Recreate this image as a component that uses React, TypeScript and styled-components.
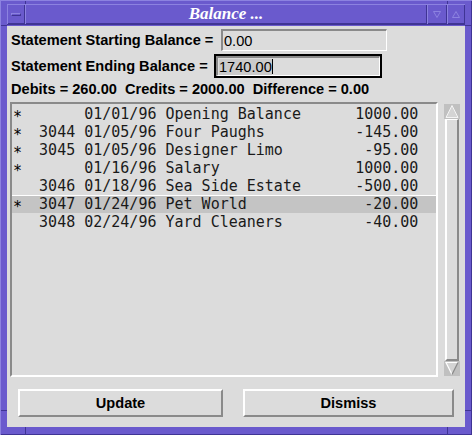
import React from 'react';
import styled, { createGlobalStyle } from 'styled-components';

const PURPLE = '#6a5acd';
const PURPLE_LIGHT = '#8c82e0';
const PURPLE_DARK = '#3f3494';
const GRAY = '#dcdcdc';
const SHADOW = '#8a8a8a';

const Global = createGlobalStyle`
  html, body { margin: 0; padding: 0; background: ${PURPLE}; }
  body { width: 472px; height: 435px; overflow: hidden; }
`;

const Window = styled.div`
  box-sizing: border-box;
  width: 472px;
  height: 435px;
  display: flex;
  flex-direction: column;
  padding: 4px 7px 8px 7px;
  background-color: ${PURPLE};
  background-image:
    linear-gradient(${PURPLE_DARK}, ${PURPLE_DARK}),
    linear-gradient(${PURPLE_DARK}, ${PURPLE_DARK}),
    linear-gradient(${PURPLE_DARK}, ${PURPLE_DARK}),
    linear-gradient(${PURPLE_DARK}, ${PURPLE_DARK}),
    linear-gradient(${PURPLE_DARK}, ${PURPLE_DARK}),
    linear-gradient(${PURPLE_DARK}, ${PURPLE_DARK}),
    linear-gradient(${PURPLE_DARK}, ${PURPLE_DARK}),
    linear-gradient(${PURPLE_DARK}, ${PURPLE_DARK});
  background-repeat: no-repeat;
  background-size: 1px 4px, 1px 4px, 1px 8px, 1px 8px, 7px 1px, 7px 1px, 7px 1px, 7px 1px;
  background-position: 25px 0, 447px 0, 25px 427px, 447px 427px, 0 25px, 0 410px, 465px 25px, 465px 410px;
  box-shadow: inset 1px 1px 0 ${PURPLE_LIGHT}, inset -1px -1px 0 ${PURPLE_DARK};
`;

const TitleBar = styled.div`
  display: flex;
  height: 20px;
  margin-bottom: 2px;
  box-shadow: 0 1px 0 ${PURPLE_DARK};
`;

const TitleCell = styled.div<{ $w?: number }>`
  box-sizing: border-box;
  ${(p) => (p.$w ? `width: ${p.$w}px; flex: none;` : 'flex: 1;')}
  height: 20px;
  display: flex;
  align-items: center;
  justify-content: center;
  box-shadow: inset 1px 1px 0 ${PURPLE_LIGHT}, inset -1px -1px 0 ${PURPLE_DARK};
`;

const TitleText = styled.span`
  font-family: 'Liberation Serif', 'DejaVu Serif', serif;
  font-weight: bold;
  font-style: italic;
  font-size: 17px;
  line-height: 20px;
  color: #ffffff;
`;

const MenuGlyph = styled.span`
  display: block;
  width: 10px;
  height: 3px;
  box-sizing: border-box;
  border-top: 1px solid ${PURPLE_LIGHT};
  border-left: 1px solid ${PURPLE_LIGHT};
  border-bottom: 1px solid ${PURPLE_DARK};
  border-right: 1px solid ${PURPLE_DARK};
`;

const Content = styled.div`
  flex: 1;
  display: flex;
  flex-direction: column;
  background: ${GRAY};
  font-family: 'Liberation Sans', Arial, sans-serif;
  color: #000;
  min-height: 0;
`;

const FieldRow = styled.div<{ $h: number }>`
  display: flex;
  align-items: center;
  height: ${(p) => p.$h}px;
  margin-top: 3px;
  padding-left: 4px;
`;

const Label = styled.div<{ $w: number }>`
  width: ${(p) => p.$w}px;
  flex: none;
  font-weight: bold;
  font-size: 14.6px;
  white-space: pre;
`;

const Field = styled.div<{ $h: number }>`
  box-sizing: border-box;
  width: 166px;
  height: ${(p) => p.$h}px;
  display: flex;
  align-items: center;
  padding-left: 1px;
  border-top: 2px solid ${SHADOW};
  border-left: 2px solid ${SHADOW};
  border-bottom: 1px solid #fff;
  border-right: 1px solid #fff;
  background: ${GRAY};
  font-size: 14.6px;
`;

const FocusRing = styled.div`
  box-sizing: border-box;
  border: 2px solid #000;
  height: 24px;
  width: 168px;
  display: flex;
`;

const SelText = styled.span`
  background: #cbcbcb;
`;

const Caret = styled.span`
  display: inline-block;
  width: 1px;
  height: 15px;
  background: #000;
`;

const Summary = styled.div`
  margin-top: 1px;
  height: 20px;
  line-height: 20px;
  padding-left: 4px;
  font-weight: bold;
  font-size: 14.6px;
  white-space: pre;
`;

const ListArea = styled.div`
  display: flex;
  margin-top: 3px;
  height: 275px;
  padding-left: 3px;
`;

const ListBox = styled.div`
  box-sizing: border-box;
  width: 428px;
  height: 275px;
  padding-top: 1px;
  border-top: 2px solid ${SHADOW};
  border-left: 2px solid ${SHADOW};
  border-bottom: 2px solid #fff;
  border-right: 2px solid #fff;
  font-family: 'DejaVu Sans Mono', 'Liberation Mono', monospace;
  font-size: 15px;
  color: #1a1a1a;
`;

const Row = styled.div<{ $sel?: boolean }>`
  box-sizing: border-box;
  display: grid;
  grid-template-columns: 3ch 5ch 9ch 21ch 7ch;
  height: 18px;
  white-space: pre;
  background: ${(p) => (p.$sel ? '#c4c4c4' : 'transparent')};
  border-top: ${(p) => (p.$sel ? '1px solid #fff' : '0')};
  line-height: ${(p) => (p.$sel ? '17px' : '18px')};
`;

const Cell = styled.span<{ $right?: boolean }>`
  text-align: ${(p) => (p.$right ? 'right' : 'left')};
`;

const FlagCell = styled.span`
  display: block;
  transform: translate(1px, 3px);
  color: #000;
`;

const ScrollBar = styled.div`
  width: 16px;
  margin-left: 6px;
  padding: 2px 0 1px;
  display: flex;
  flex-direction: column;
`;

const Arrow = styled.svg`
  display: block;
  width: 16px;
  height: 15px;
  flex: none;
  background: #c0c0c0;
`;

const Thumb = styled.div`
  flex: 1;
  box-sizing: border-box;
  margin: 0 1px;
  border-top: 1px solid #fff;
  border-left: 2px solid #fff;
  border-right: 2px solid ${SHADOW};
  border-bottom: 2px solid ${SHADOW};
  background: ${GRAY};
`;

const ButtonRow = styled.div`
  display: grid;
  grid-template-columns: 205px 211px;
  column-gap: 20px;
  padding: 0 11px;
  margin-top: 12px;
`;

const Button = styled.button`
  box-sizing: border-box;
  height: 28px;
  margin: 0;
  padding: 0;
  background: ${GRAY};
  border-top: 2px solid #fff;
  border-left: 2px solid #fff;
  border-bottom: 2px solid ${SHADOW};
  border-right: 2px solid ${SHADOW};
  font-family: 'Liberation Sans', Arial, sans-serif;
  font-weight: bold;
  font-size: 14.6px;
  color: #000;
`;

const rows = [
  { flag: '*', num: '', date: '01/01/96', desc: 'Opening Balance', amt: '1000.00' },
  { flag: '*', num: '3044', date: '01/05/96', desc: 'Four Paughs', amt: '-145.00' },
  { flag: '*', num: '3045', date: '01/05/96', desc: 'Designer Limo', amt: '-95.00' },
  { flag: '*', num: '', date: '01/16/96', desc: 'Salary', amt: '1000.00' },
  { flag: '', num: '3046', date: '01/18/96', desc: 'Sea Side Estate', amt: '-500.00' },
  { flag: '*', num: '3047', date: '01/24/96', desc: 'Pet World', amt: '-20.00', sel: true },
  { flag: '', num: '3048', date: '02/24/96', desc: 'Yard Cleaners', amt: '-40.00' },
];

export default function App() {
  return (
    <>
      <Global />
      <Window>
        <TitleBar>
          <TitleCell $w={18}>
            <MenuGlyph />
          </TitleCell>
          <TitleCell>
            <TitleText>Balance ...</TitleText>
          </TitleCell>
          <TitleCell $w={20}>
            <svg width="8" height="7" viewBox="0 0 8 7">
              <path d="M0.5 0.5 L7.5 0.5 L4 6.5 Z" fill="none" stroke={PURPLE_LIGHT} strokeWidth="1" />
            </svg>
          </TitleCell>
          <TitleCell $w={18}>
            <svg width="8" height="7" viewBox="0 0 8 7">
              <path d="M4 0.5 L7.5 6.5 L0.5 6.5 Z" fill="none" stroke={PURPLE_LIGHT} strokeWidth="1" />
            </svg>
          </TitleCell>
        </TitleBar>
        <Content>
          <FieldRow $h={22}>
            <Label $w={210}>Statement Starting Balance =</Label>
            <Field $h={22}>0.00</Field>
          </FieldRow>
          <FieldRow $h={24}>
            <Label $w={203}>Statement Ending Balance =</Label>
            <FocusRing>
              <Field $h={20}>
                <SelText>1740.00</SelText>
                <Caret />
              </Field>
            </FocusRing>
          </FieldRow>
          <Summary>Debits = 260.00  Credits = 2000.00  Difference = 0.00</Summary>
          <ListArea>
            <ListBox>
              {rows.map((r, i) => (
                <Row key={i} $sel={r.sel}>
                  <FlagCell>{r.flag}</FlagCell>
                  <Cell>{r.num}</Cell>
                  <Cell>{r.date}</Cell>
                  <Cell>{r.desc}</Cell>
                  <Cell $right>{r.amt}</Cell>
                </Row>
              ))}
            </ListBox>
            <ScrollBar>
              <Arrow viewBox="0 0 16 15">
                <path d="M8 1.5 L14 13.5 L2 13.5 Z" fill="#d4d4d4" />
                <path d="M8 1.5 L14 13.5 L2 13.5 Z" stroke="#f4f4f4" strokeWidth="1" fill="none" />
              </Arrow>
              <Thumb />
              <Arrow viewBox="0 0 16 15">
                <path d="M2 1.5 L14 1.5 L8 13.5 Z" fill="#d4d4d4" />
                <path d="M8 13.5 L2 1.5 L14 1.5" stroke="#fff" strokeWidth="1.2" fill="none" />
                <path d="M14 1.5 L8 13.5" stroke={SHADOW} strokeWidth="1.2" fill="none" />
              </Arrow>
            </ScrollBar>
          </ListArea>
          <ButtonRow>
            <Button>Update</Button>
            <Button>Dismiss</Button>
          </ButtonRow>
        </Content>
      </Window>
    </>
  );
}
